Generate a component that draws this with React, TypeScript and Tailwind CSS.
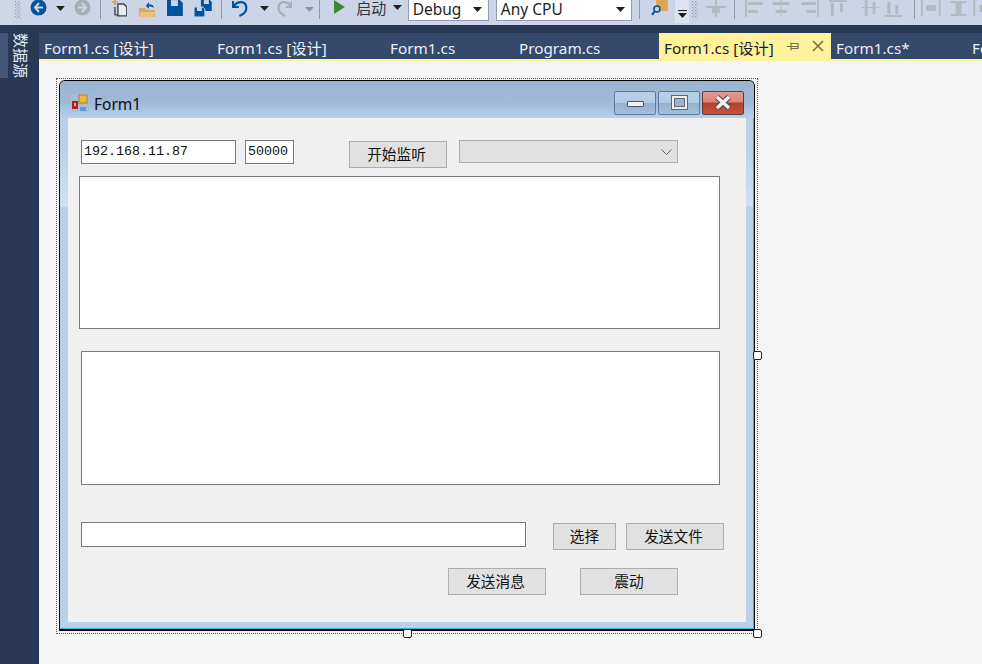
const zh = "font-['Noto_Sans','Noto_Sans_CJK_SC',sans-serif]";
const cjk = "font-['Noto_Sans_CJK_SC',sans-serif]";

function Caret({ color = "#1e1e1e", className = "" }: { color?: string; className?: string }) {
  return (
    <svg width="9" height="5" viewBox="0 0 9 5" className={className}>
      <path d="M0 0h9L4.5 5z" fill={color} />
    </svg>
  );
}

function Sep({ className = "" }: { className?: string }) {
  return <div className={`w-px h-[19px] bg-[#8e98ab] ${className}`} />;
}

function Grip({ className = "" }: { className?: string }) {
  return (
    <svg width="6" height="19" viewBox="0 0 6 19" className={className}>
      {[1, 4, 7, 10, 13, 16].map((y) => (
        <g key={y} fill="#8f98aa">
          <rect x="0" y={y} width="1" height="1" />
          <rect x="3" y={y} width="1" height="1" />
          <rect x="1.5" y={y + 1.5} width="1" height="1" />
          <rect x="4.5" y={y + 1.5} width="1" height="1" />
        </g>
      ))}
    </svg>
  );
}

function NavCircle({ dir, color, inner }: { dir: "l" | "r"; color: string; inner: string }) {
  return (
    <svg width="17" height="17" viewBox="0 0 17 17">
      <circle cx="8.5" cy="8.5" r="8" fill={color} />
      <path
        d={dir === "l" ? "M9 4 5 8.5 9 13M5.5 8.5H13" : "M8 4l4 4.5L8 13M11.5 8.5H4"}
        fill="none"
        stroke={inner}
        strokeWidth="2"
      />
    </svg>
  );
}

function Toolbar() {
  return (
    <div className="h-[25px] bg-[#ccd5e8] overflow-hidden flex items-start relative">
      <div className="w-[12px] h-[25px] bg-[#cfd6e5]" />
      <Grip className="ml-[3px]" />
      <div className="ml-[9px] -mt-[1px]"><NavCircle dir="l" color="#00539c" inner="#ccd5e8" /></div>
      <Caret className="ml-[9px] mt-[6px]" />
      <div className="ml-[9px] -mt-[1px]"><NavCircle dir="r" color="#a9adb5" inner="#ccd5e8" /></div>
      <Sep className="ml-[9px]" />
      <svg width="16" height="17" viewBox="0 0 16 17" className="ml-[11px]">
        <path d="M6 4h6l3 3v9H6z" fill="#e8ecf4" stroke="#424242" strokeWidth="1.400" />
        <path d="M3 7v8h3" fill="none" stroke="#424242" strokeWidth="1.400" />
        <path d="M0 2h6M3-1v6" stroke="#c8a25c" strokeWidth="1.600" />
      </svg>
      <svg width="18" height="18" viewBox="0 0 18 18" className="ml-[11px]">
        <path d="M1 8h6l2 2h8v7H1z" fill="#dcaa5f" />
        <path d="M3 12h14l-2 5H1z" fill="#eec27e" />
        <path d="M8 6 11 2v2.5c3 0 5 0 5 4-1-2-3-2-5-2V9z" fill="#00539c" />
      </svg>
      <svg width="16" height="16" viewBox="0 0 16 16" className="ml-[11px]">
        <path d="M0 0h13l3 3v13H0z" fill="#00539c" />
        <rect x="4" y="0" width="7" height="6" fill="#ccd5e8" />
      </svg>
      <svg width="18" height="17" viewBox="0 0 18 17" className="ml-[11px]">
        <path d="M7 0h9l2 2v9H7z" fill="#00539c" />
        <rect x="10" y="0" width="5" height="4" fill="#ccd5e8" />
        <path d="M0 7h9l2 2v8H0z" fill="#00539c" stroke="#ccd5e8" />
        <rect x="3" y="7" width="5" height="4" fill="#ccd5e8" />
      </svg>
      <Sep className="ml-[9px]" />
      <svg width="16" height="17" viewBox="0 0 16 17" className="ml-[10px]">
        <path d="M1 1v6h6M2 6c2-3 4-4 7-4 3.500 0 5.500 2.500 5.500 6 0 4-3 6.500-7 8" fill="none" stroke="#00539c" strokeWidth="2.200" />
      </svg>
      <Caret className="ml-[12px] mt-[6px]" />
      <svg width="16" height="17" viewBox="0 0 16 17" className="ml-[8px]">
        <path d="M15 1v6H9M14 6c-2-3-4-4-7-4C3.500 2 1.500 4.500 1.500 8c0 4 3 6.500 7 8" fill="none" stroke="#a9adb5" strokeWidth="2.200" />
      </svg>
      <Caret color="#8f939b" className="ml-[13px] mt-[7px]" />
      <Sep className="ml-[5px]" />
      <svg width="12" height="15" viewBox="0 0 12 15" className="ml-[14px]">
        <path d="M0 0l11 7L0 14z" fill="#388a34" />
      </svg>
      <span className={`ml-[10px] text-[15px] leading-[16px] text-[#33333f] w-[31px] whitespace-nowrap ${cjk}`}>启动</span>
      <Caret className="ml-[6px] mt-[5px]" />
      <div className="ml-[6px] -mt-[3px] w-[82px] h-[24px] bg-white border border-[#8e9bbc] flex items-center pl-[4px] pr-[6px] justify-between">
        <span className={`text-[15.500px] leading-[18px] text-[#1e1e1e] ${zh}`}>Debug</span>
        <Caret />
      </div>
      <div className="ml-[7px] -mt-[3px] w-[138px] h-[24px] bg-white border border-[#8e9bbc] flex items-center pl-[4px] pr-[6px] justify-between">
        <span className={`text-[15.500px] leading-[18px] text-[#1e1e1e] ${zh}`}>Any CPU</span>
        <Caret />
      </div>
      <Sep className="ml-[7px]" />
      <svg width="18" height="18" viewBox="0 0 18 18" className="ml-[11px]">
        <rect x="5" y="0" width="12" height="11" fill="#e0a551" />
        <circle cx="6" cy="9" r="3" fill="#ccd5e8" stroke="#00539c" strokeWidth="1.600" />
        <path d="M3.500 11.500 1 15" stroke="#00539c" strokeWidth="2" />
      </svg>
      <div className="ml-[6px] w-[14px] h-[23px] bg-[#dde3f0] flex flex-col items-center pt-[10px] gap-[2px]">
        <div className="w-[9px] h-px bg-[#1e1e1e]" />
        <Caret />
      </div>
      <Grip className="ml-[3px]" />
      <svg width="22" height="18" viewBox="0 0 22 18" className="ml-[7px]" fill="#b4b8c0">
        <rect x="1" y="6" width="20" height="2" />
        <rect x="10" y="0" width="2" height="17" />
        <rect x="7" y="8" width="8" height="5" />
      </svg>
      <Sep className="ml-[7px]" />
      <svg width="240" height="18" viewBox="0 0 240 18" className="ml-[10px]" fill="#b4b8c0">
        <rect x="0" y="0" width="2" height="17" /><rect x="3" y="2" width="15" height="3" /><rect x="3" y="10" width="10" height="3" />
        <rect x="36" y="0" width="1" height="17" /><rect x="28" y="2" width="17" height="3" /><rect x="31" y="10" width="11" height="3" />
        <rect x="73" y="0" width="2" height="17" /><rect x="57" y="2" width="15" height="3" /><rect x="62" y="10" width="10" height="3" />
        <rect x="85" y="0" width="18" height="2" /><rect x="87" y="3" width="3" height="13" /><rect x="96" y="3" width="3" height="9" />
        <rect x="118" y="7" width="18" height="1" /><rect x="121" y="0" width="3" height="16" /><rect x="129" y="2" width="3" height="12" />
        <rect x="141" y="15" width="18" height="2" /><rect x="144" y="2" width="3" height="12" /><rect x="152" y="5" width="3" height="9" />
        <rect x="178" y="0" width="2" height="16" /><rect x="196" y="0" width="2" height="16" /><rect x="183" y="5" width="10" height="6" />
        <rect x="208" y="1" width="16" height="2" /><rect x="208" y="14" width="16" height="2" /><rect x="213" y="3" width="6" height="11" />
        <rect x="231" y="0" width="2" height="16" /><rect x="237" y="5" width="3" height="7" />
      </svg>
      <Sep className="absolute left-[914px] top-0" />
    </div>
  );
}

function Sidebar() {
  return (
    <div className="w-[39px] shrink-0 bg-[#293955] pt-[8px]">
      <div className="w-[8px] h-[45px] bg-[#425677] relative">
        <span
          className={`absolute left-[13px] top-0 text-[15px] leading-[17px] text-[#dfeef5] whitespace-nowrap [writing-mode:vertical-rl] [text-orientation:sideways] ${cjk}`}
        >
          数据源
        </span>
      </div>
    </div>
  );
}

function Tab({ label, width, active }: { label: string; width: string; active?: boolean }) {
  return (
    <div
      className={`${width} shrink-0 flex items-center h-[26px] pt-[4px] text-[15.280px] whitespace-nowrap ${zh} ${
        active ? "bg-[#fff29d] text-[#1e1e1e] pl-[5px]" : "text-[#e8eff9] pl-[5px]"
      }`}
    >
      {label}
      {active && (
        <div className="flex items-center ml-[12px] gap-[12px] -mt-[4px]">
          <svg width="14" height="11" viewBox="0 0 14 11">
            <path d="M1 5.500H5M5 1.500v8M5 2.500h7v5H5M5 5.500h7" fill="none" stroke="#75704a" strokeWidth="1.200" />
          </svg>
          <svg width="12" height="12" viewBox="0 0 12 12">
            <path d="M1 1l10 10M11 1 1 11" stroke="#75704a" strokeWidth="1.600" />
          </svg>
        </div>
      )}
    </div>
  );
}

function Tabs() {
  return (
    <div className="h-[26px] bg-[#35496a] flex overflow-hidden">
      <Tab label="Form1.cs [设计]" width="w-[173px]" />
      <Tab label="Form1.cs [设计]" width="w-[173px]" />
      <Tab label="Form1.cs" width="w-[129px]" />
      <Tab label="Program.cs" width="w-[145px]" />
      <Tab label="Form1.cs [设计]" width="w-[172px]" active />
      <Tab label="Form1.cs*" width="w-[136px]" />
      <Tab label="Form1.cs" width="w-[100px]" />
    </div>
  );
}

function CapButton({ kind }: { kind: "min" | "max" | "close" }) {
  const close = kind === "close";
  return (
    <div
      className={`w-[42px] h-[24px] rounded-[2px] border flex items-center justify-center ${
        close
          ? "border-[#5f3a44] bg-[linear-gradient(#e29a8f_0%,#db8577_45%,#b5412a_50%,#c0543c_100%)]"
          : "border-[#5d7aa0] bg-[linear-gradient(#b9cfe8_0%,#b4cbe5_48%,#95b0cf_50%,#a5bfdb_100%)]"
      }`}
    >
      {kind === "min" && <div className="w-[17px] h-[6px] mt-[3px] bg-[#f2f2f2] border border-[#45556e] rounded-[1px]" />}
      {kind === "max" && (
        <div className="w-[17px] h-[15px] -mt-[1px] border border-[#5a6679] bg-[#f0f0f0] flex items-center justify-center">
          <div className="w-[11px] h-[9px] bg-[#9db5d3] border border-[#5a6679]" />
        </div>
      )}
      {kind === "close" && (
        <svg width="18" height="15" viewBox="0 0 18 15">
          <path d="M3 2l12 11M15 2 3 13" stroke="#45485a" strokeWidth="5.500" />
          <path d="M3 2l12 11M15 2 3 13" stroke="#f0f0f0" strokeWidth="3.500" />
        </svg>
      )}
    </div>
  );
}

function WinButton({ label, className = "" }: { label: string; className?: string }) {
  return (
    <div className={`h-[27px] bg-[#e1e1e1] border border-[#adadad] shrink-0 flex items-center justify-center pb-[2px] text-[14.670px] text-[#111] ${cjk} ${className}`}>
      {label}
    </div>
  );
}

function TextBox({ value = "", className = "" }: { value?: string; className?: string }) {
  return (
    <div className={`bg-white border border-[#7a7a7a] shrink-0 flex items-center pl-[2px] font-['Liberation_Mono',monospace] text-[13.330px] text-[#111] ${className}`}>
      {value}
    </div>
  );
}

function Handle({ className }: { className: string }) {
  return <div className={`absolute w-[9px] h-[9px] bg-white border border-[#222] rounded-[2px] ${className}`} />;
}

function Client() {
  return (
    <div className="w-[678px] h-[504px] bg-[#f0f0f0] pt-[22px]">
      <div className="flex items-start pl-[13px]">
        <TextBox value="192.168.11.87" className="w-[155px] h-[24px]" />
        <TextBox value="50000" className="w-[49px] h-[24px] ml-[9px]" />
        <WinButton label="开始监听" className="w-[98px] ml-[55px] mt-[1px] pr-[3px]" />
        <div className="w-[219px] h-[23px] ml-[12px] bg-[#e1e1e1] border border-[#adadad] flex items-center justify-end pr-[5px]">
          <svg width="11" height="6" viewBox="0 0 11 6">
            <path d="M.5.5l5 5 5-5" fill="none" stroke="#606060" />
          </svg>
        </div>
      </div>
      <TextBox className="w-[641px] h-[153px] ml-[11px] mt-[8px]" />
      <TextBox className="w-[639px] h-[134px] ml-[13px] mt-[22px]" />
      <div className="flex items-start pl-[13px] mt-[37px]">
        <TextBox className="w-[445px] h-[25px]" />
        <WinButton label="选择" className="w-[63px] ml-[27px] mt-[1px]" />
        <WinButton label="发送文件" className="w-[98px] ml-[10px] mt-[1px] pr-[3px]" />
      </div>
      <div className="flex items-start pl-[380px] mt-[18px]">
        <WinButton label="发送消息" className="w-[98px] pr-[3px]" />
        <WinButton label="震动" className="w-[98px] ml-[34px]" />
      </div>
    </div>
  );
}

function FormWindow() {
  return (
    <div className="w-[696px] h-[551px] bg-[linear-gradient(#b9d1ea_0px,#b9d1ea_70px,#d0e1f3_125px,#b9d1ea_126px)] shadow-[inset_-1px_-1px_0_#3fb0d8] border-t border-x border-b-2 border-black rounded-t-[6px] overflow-hidden flex flex-col items-center">
      <div className="w-full h-[37px] shrink-0 bg-[linear-gradient(#99b4d1,#9fbad7_60%,#b9d1ea)] flex items-center pl-[11px] pr-[10px] pt-[6px]">
        <svg width="18" height="18" viewBox="0 0 18 18" className="shrink-0">
          <rect width="18" height="18" fill="#a9bdd5" />
          <rect x="1" y="7" width="6" height="8" fill="#b3201c" />
          <rect x="3" y="9" width="2" height="3" fill="#e8b0a0" />
          <rect x="8" y="1" width="8" height="8" fill="#e8b838" stroke="#a88424" />
          <rect x="9" y="13" width="6" height="4" fill="#5b9ade" />
        </svg>
        <span className={`ml-[5px] mt-[5px] text-[15.500px] text-[#0a0a14] ${zh}`}>Form1</span>
        <div className="ml-auto flex gap-[2px]">
          <CapButton kind="min" />
          <CapButton kind="max" />
          <CapButton kind="close" />
        </div>
      </div>
      <Client />
    </div>
  );
}

export default function App() {
  return (
    <div className="w-[982px] h-[664px] overflow-hidden flex flex-col bg-[#293955]">
      <Toolbar />
      <div className="flex flex-1 min-h-0">
        <Sidebar />
        <div className="flex-1 min-w-0 flex flex-col pt-[8px]">
          <Tabs />
          <div className="h-[2px] bg-[#fff29d]" />
          <div className="flex-1 bg-[#f5f5f5] pl-[17px] pt-[17px]">
            <div className="relative w-[702px] h-[556px] border border-dotted border-[#555] p-[2px] pt-[1px]">
              <FormWindow />
              <Handle className="left-[696px] top-[272px]" />
              <Handle className="left-[346px] top-[550px]" />
              <Handle className="left-[696px] top-[550px]" />
            </div>
          </div>
        </div>
      </div>
    </div>
  );
}
